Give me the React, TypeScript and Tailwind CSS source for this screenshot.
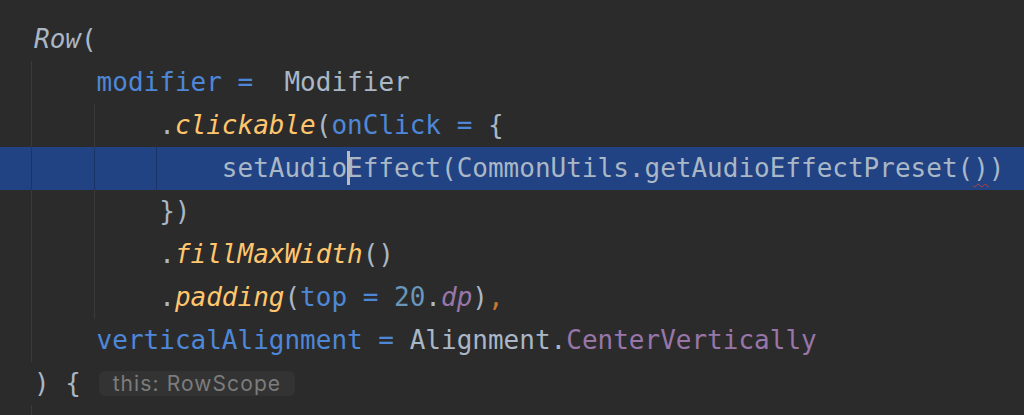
import type { ReactNode } from "react";

type Seg = { t: string; c?: string; i?: boolean };

const GRAY = "text-[#a9b7c6]";
const BLUE = "text-[#4e87d8]";
const ORANGE = "text-[#ffc66d]";
const NUM = "text-[#6897bb]";
const PURPLE = "text-[#9876aa]";
const COMMA = "text-[#cc7832]";

type Line = {
  indent: number;
  guides: number[];
  active?: boolean;
  body?: ReactNode;
};

function Segs({ segs }: { segs: Seg[] }) {
  return (
    <>
      {segs.map((s, i) => (
        <span key={i} className={`${s.c ?? GRAY} ${s.i ? "italic" : ""}`}>
          {s.t}
        </span>
      ))}
    </>
  );
}

const lines: Line[] = [
  {
    indent: 0,
    guides: [],
    body: <Segs segs={[{ t: "Row", i: true }, { t: "(" }]} />,
  },
  {
    indent: 1,
    guides: [0],
    body: <Segs segs={[{ t: "modifier =", c: BLUE }, { t: "  Modifier" }]} />,
  },
  {
    indent: 2,
    guides: [0, 1],
    body: (
      <Segs
        segs={[
          { t: "." },
          { t: "clickable", c: ORANGE, i: true },
          { t: "(" },
          { t: "onClick =", c: BLUE },
          { t: " {" },
        ]}
      />
    ),
  },
  {
    indent: 3,
    guides: [0, 1, 2],
    active: true,
    body: (
      <span className={GRAY}>
        setAudio
        <span className="inline-block w-[3px] -mr-[3px] h-[34px] bg-[#bbbbbb] align-[-8px]" />
        Effect(CommonUtils.getAudioEffectPreset(
        <span className="underline decoration-wavy decoration-[#bc3f3c] decoration-1 underline-offset-[6px]">)</span>)
      </span>
    ),
  },
  {
    indent: 2,
    guides: [0, 1],
    body: <Segs segs={[{ t: "})" }]} />,
  },
  {
    indent: 2,
    guides: [0, 1],
    body: <Segs segs={[{ t: "." }, { t: "fillMaxWidth", c: ORANGE, i: true }, { t: "()" }]} />,
  },
  {
    indent: 2,
    guides: [0, 1],
    body: (
      <Segs
        segs={[
          { t: "." },
          { t: "padding", c: ORANGE, i: true },
          { t: "(" },
          { t: "top = ", c: BLUE },
          { t: "20", c: NUM },
          { t: "." },
          { t: "dp", c: PURPLE, i: true },
          { t: ")" },
          { t: ",", c: COMMA },
        ]}
      />
    ),
  },
  {
    indent: 1,
    guides: [0],
    body: (
      <Segs
        segs={[
          { t: "verticalAlignment = ", c: BLUE },
          { t: "Alignment." },
          { t: "CenterVertically", c: PURPLE },
        ]}
      />
    ),
  },
  {
    indent: 0,
    guides: [],
    body: (
      <>
        <Segs segs={[{ t: ") { " }]} />
        <span className="ml-[2px] inline-flex items-center h-[25px] px-[14px] rounded-[6px] bg-[#333333] text-[#7c7c7c] font-['Inter',sans-serif] text-[21px] tracking-[1.1px] leading-none not-italic align-[1px]">
          this: RowScope
        </span>
      </>
    ),
  },
  { indent: 1, guides: [0] },
];

export default function App() {
  return (
    <div className="w-[1024px] h-[415px] overflow-hidden bg-[#2b2b2b] pt-[18px] font-['DejaVu_Sans_Mono',monospace] text-[26px]">
      {lines.map((ln, idx) => (
        <div
          key={idx}
          className={`h-[43px] flex items-center whitespace-pre pl-[31px] ${ln.active ? "bg-[#214283]" : ""}`}
        >
          {Array.from({ length: ln.indent }).map((_, k) => (
            <span
              key={k}
              className={`w-[4ch] h-full shrink-0 border-l ${
                ln.guides.includes(k)
                  ? ln.active
                    ? "border-[#1a3468]"
                    : "border-[#3a3a3a]"
                  : "border-transparent"
              }`}
            />
          ))}
          <span className="pl-[3px] leading-[43px]">{ln.body}</span>
        </div>
      ))}
    </div>
  );
}
